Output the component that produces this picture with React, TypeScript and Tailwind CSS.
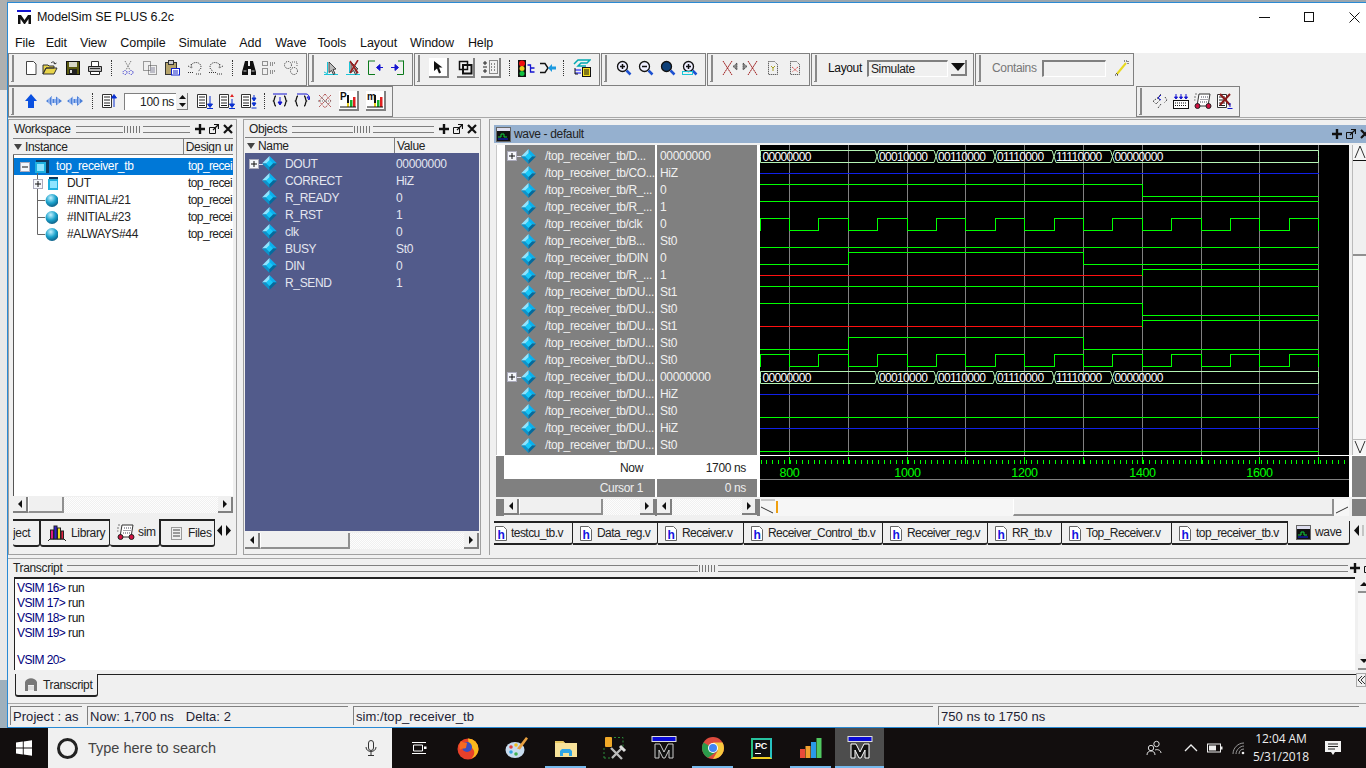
import React from "react";

type SP = { w?: number; h?: number; className?: string; children?: React.ReactNode };
const S = ({ w = 16, h = 16, className = "", children }: SP) => (
  <svg width={w} height={h} viewBox={`0 0 ${w} ${h}`} className={"block shrink-0 " + className}>{children}</svg>
);

const Grip = () => <div className="ml-[2px] w-[3px] h-[27px] shrink-0 border-r-2 border-b border-[#8a8a8a]" />;
const Sep = ({ className = "" }: { className?: string }) => (
  <div className={"w-px h-[16px] shrink-0 border-l border-dotted border-[#333] " + className} />
);
const Group = ({ className = "", children }: { className?: string; children: React.ReactNode }) => (
  <div className={"flex items-center shrink-0 h-full border border-[#808080] " + className}>{children}</div>
);

/* ---- toolbar icons ---- */
const INew = ({ className }: SP) => <S className={className}><path d="M3.500 1.500h7l2.500 2.500v10.500h-9.500z" fill="#fff" stroke="#444" /></S>;
const IOpen = ({ className }: SP) => <S className={className}><path d="M1 14V5h5l1 1h5v2H4L1 14zM1 14l3-6h11l-3 6z" fill="#e8d44a" stroke="#333" /><path d="M9 3c2-2 4-1 4 1M13 4l1.500-1M13 4l-1.500-1" stroke="#333" fill="none" /></S>;
const ISave = ({ className }: SP) => <S className={className}><rect x="1.500" y="1.500" width="13" height="13" fill="#5a5a10" stroke="#111" /><rect x="4" y="2" width="8" height="5" fill="#d8d8c8" /><rect x="4" y="9" width="8" height="5" fill="#222" /><rect x="5" y="10" width="2" height="3" fill="#ddd" /></S>;
const IPrint = ({ className }: SP) => <S className={className}><path d="M4.500 6V1.500h7V6" fill="#fff" stroke="#333" /><path d="M1.500 6.500h13v5h-13z" fill="#bbb" stroke="#222" /><path d="M3.500 11.500h9v3h-9z" fill="#fff" stroke="#222" /><path d="M3 8.500h10" stroke="#333" /></S>;
const ICut = ({ className }: SP) => <S className={className}><path d="M5 1l5 9M11 1l-5 9" stroke="#666" strokeDasharray="1 1" /><circle cx="5" cy="12.500" r="2" fill="none" stroke="#22c" strokeDasharray="1 1" /><circle cx="11" cy="12.500" r="2" fill="none" stroke="#22c" strokeDasharray="1 1" /></S>;
const ICopy = ({ className }: SP) => <S className={className}><path d="M1.500 1.500h7v9h-7zM6.500 5.500h8v9h-8z" fill="none" stroke="#444" strokeDasharray="1 1" /><path d="M8 7h5v6H8z" fill="#99a" opacity=".6" /></S>;
const IPaste = ({ className }: SP) => <S className={className}><rect x="1.500" y="2.500" width="11" height="12" fill="#b5a36a" stroke="#333" /><rect x="4.500" y="0.500" width="5" height="4" fill="#ccc" stroke="#333" /><rect x="7.500" y="8.500" width="8" height="6.500" fill="#fff" stroke="#12c" /><path d="M9 11h5M9 13h5" stroke="#12c" /></S>;
const IUndo = ({ className }: SP) => <S className={className}><path d="M1 12.500h6M9 14h6M4 5c3-4 10-3 10 2 0 2-1 3-3 4" fill="none" stroke="#333" strokeDasharray="1 1" /><path d="M1 6l4 2-1-4" fill="none" stroke="#333" strokeDasharray="1 1" /></S>;
const IRedo = ({ className }: SP) => <S className={className}><path d="M1 12.500h7M9 14h6M12 5C9 1 2 2 2 7c0 2 1 3 3 4" fill="none" stroke="#333" strokeDasharray="1 1" /><path d="M15 6l-4 2 1-4" fill="none" stroke="#333" strokeDasharray="1 1" /></S>;
const IBinoc = ({ className }: SP) => <S className={className}><path d="M4 1h3v5h2V1h3l3 11v3h-5V9H7v6H1v-3z" fill="#111" /><path d="M2.500 11h3M10.500 11h3" stroke="#ccc" /></S>;
const IFind = ({ className }: SP) => <S className={className}><path d="M1.500 1.500h5v4h-5zM1.500 8.500h5v6h-5zM9 3h6M9 5h4M9 11h6M9 13h4" fill="none" stroke="#333" strokeDasharray="1 1" /></S>;
const IReplace = ({ className }: SP) => <S className={className}><circle cx="5" cy="5" r="3.500" fill="none" stroke="#333" strokeDasharray="1 1" /><circle cx="11" cy="11" r="3.500" fill="none" stroke="#333" strokeDasharray="1 1" /><path d="M9 2h5v5" fill="none" stroke="#666" strokeDasharray="1 1" /></S>;
const ICursorA = ({ className }: SP) => <S className={className}><path d="M4.500 2v11M1 14.500h14" stroke="#19c5d8" fill="none" /><path d="M1 12l4 2M3 14.500h8" stroke="#19c5d8" /><path d="M6 2l7 7-3 .5 2 4-1.500 1-2-4-2.500 2z" fill="#bbb" stroke="#222" strokeWidth=".8" /></S>;
const ICursorX = ({ className }: SP) => <S className={className}><path d="M4.500 2v11M1 14.500h14" stroke="#19c5d8" fill="none" /><path d="M6 2l7 7-3 .5 2 4-1.500 1-2-4-2.500 2z" fill="#bbb" stroke="#222" strokeWidth=".8" /><path d="M13 0L5 13M5 1l8 12" stroke="#9b1c1c" strokeWidth="1.500" /></S>;
const ICurLeft = ({ className }: SP) => <S w={18} className={className}><path d="M1.500 0.500V14.500H8M2 1h6" stroke="#0a7a1a" fill="none" /><path d="M16 7.500H10M13 4.500L9.500 7.500 13 10.500z" stroke="#1414d0" fill="#1414d0" /></S>;
const ICurRight = ({ className }: SP) => <S className={className}><path d="M14.500 0.500V14.500H8M14.500 1H9" stroke="#0a7a1a" fill="none" /><path d="M2 7.500h6M6 4.500l3.500 3L6 10.500z" stroke="#1414d0" fill="#1414d0" /></S>;
const Btn = ({ w, className = "", children }: { w: string; className?: string; children: React.ReactNode }) => (
  <div className={`${w} h-[20px] shrink-0 flex items-center justify-center border-r-2 border-b-2 border-[#808080] ` + className}>{children}</div>
);
const IArrowBtn = ({ className }: SP) => <Btn w="w-[20px]" className={"bg-white " + (className || "")}><svg width="12" height="15" viewBox="0 0 12 15"><path d="M2 1v10l3-2.500 2 5 2-1-2-5h3.500z" fill="#111" /></svg></Btn>;
const IZoomBtn = ({ className }: SP) => <Btn w="w-[18px]" className={className}><svg width="15" height="15" viewBox="0 0 15 15"><path d="M1.500 1.500h8v8h-8z" fill="none" stroke="#111" strokeWidth="1.500" /><path d="M5 5h8.500v8.500H5z" fill="none" stroke="#111" strokeWidth="2" /></svg></Btn>;
const ISplitBtn = ({ className }: SP) => <Btn w="w-[20px]" className={className}><svg width="17" height="16" viewBox="0 0 17 16"><path d="M1 4h4M1 8h4M1 12h4M3 2v4M3 10v4" stroke="#222" /><path d="M7.500 1.500h8v13h-8z" fill="none" stroke="#222" strokeDasharray="1 1" /><path d="M9 5h1M12 5h1M9 8h1M12 8h1M9 11h1M12 11h1" stroke="#222" /></svg></Btn>;
const ITraffic = ({ className }: SP) => <S w={17} h={17} className={className}><rect x="0" y="0" width="8" height="17" fill="#111" /><circle cx="4" cy="3.500" r="3" fill="#f01010" /><circle cx="4" cy="8.500" r="2.500" fill="#e8d020" /><circle cx="4" cy="13.500" r="2.500" fill="#10c040" /><path d="M9.500 5h3v7h4M12.500 8h4" fill="none" stroke="#1414d0" strokeWidth="1.300" /></S>;
const IMerge = ({ className }: SP) => <S className={className}><path d="M0 3.500h5l3 4.500-3 4.500H0" fill="none" stroke="#111" strokeWidth="1.400" /><path d="M16 6.500h-4V4L8 8l4 4V9.500h4z" fill="#1c9ae0" /></S>;
const IWaveYellow = ({ className }: SP) => <S w={18} h={18} className={className}><path d="M1 5l4-4h12l-3 3H8L5 7h8" fill="none" stroke="#00a8b0" strokeWidth="1.500" /><path d="M2 11h6M2 14h6" stroke="#00f" /><path d="M2 9v6h3" stroke="#111" fill="none" /><rect x="9.500" y="8.500" width="8" height="9" fill="#f4e020" stroke="#111" /><path d="M11 11h5M11 13h5M11 15h5" stroke="#111" /></S>;
const Lens = ({ fill = "none", children }: { fill?: string; children?: React.ReactNode }) => <><circle cx="6.500" cy="6.500" r="5" fill={fill} stroke="#111" strokeWidth="1.300" /><path d="M10.500 10.500l4 4" stroke="#1c50d0" strokeWidth="2.500" />{children}</>;
const IZoomIn = ({ className }: SP) => <S className={className}><Lens fill="#eef"><path d="M4 6.500h5M6.500 4v5" stroke="#111" strokeWidth="1.500" /></Lens></S>;
const IZoomOut = ({ className }: SP) => <S className={className}><Lens fill="#eef"><path d="M4 6.500h5" stroke="#111" strokeWidth="1.500" /></Lens></S>;
const IZoomFull = ({ className }: SP) => <S className={className}><Lens fill="#0d3f78" /></S>;
const IZoomCur = ({ className }: SP) => <S className={className}><Lens fill="#eef"><path d="M4 6.500h5M6.500 4v5" stroke="#111" strokeWidth="1.500" /><rect x="0.500" y="11.500" width="10" height="3" fill="none" stroke="#19c5d8" /></Lens></S>;
const IXL = ({ className }: SP) => <S className={className}><path d="M1 1l9 14M10 1L1 15" stroke="#a02020" strokeDasharray="2 .5" /><path d="M15 3L11 6.500l4 3.500z" fill="#888" stroke="#333" strokeDasharray="1 1" /></S>;
const IXR = ({ className }: SP) => <S className={className}><path d="M6 1l9 14M15 1L6 15" stroke="#a02020" strokeDasharray="2 .5" /><path d="M1 3L5 6.500 1 10z" fill="#888" stroke="#333" strokeDasharray="1 1" /></S>;
const IDocA = ({ className }: SP) => <S className={className}><path d="M3.500 1.500h6l3 3v10h-9z" fill="none" stroke="#333" strokeDasharray="1 1" /><path d="M6 6l2 2 2-2M8 8v3" stroke="#a8a020" fill="none" /></S>;
const IDocB = ({ className }: SP) => <S className={className}><path d="M3.500 1.500h6l3 3v10h-9z" fill="none" stroke="#333" strokeDasharray="1 1" /><path d="M5 7l6 5M11 7l-6 5" stroke="#d02020" strokeDasharray="1 1" /></S>;
const IPencil = ({ className }: SP) => <S className={className}><path d="M3 14l9-11" stroke="#e8d820" strokeWidth="2" /><path d="M10 1h4v4M2 13l2 2" fill="none" stroke="#222" strokeDasharray="1 1" /><path d="M1 15h4" stroke="#222" strokeDasharray="1 1" /></S>;
const IUp = ({ className }: SP) => <S className={className}><path d="M8 1l6 7h-3v7H5V8H2z" fill="#0a50e0" /></S>;
const ILeftArr = ({ className }: SP) => <S className={className}><path d="M0 8l6-5v3h4V3.500L16 8l-6 4.500V10H6v3z" fill="#4a7fd8" /><path d="M3 5v6M6 4v8M9 4v8M12 5v6" stroke="#d8e4ff" /></S>;
const IRightArr = ({ className }: SP) => <S className={className}><path d="M16 8l-6-5v3H6V3.500L0 8l6 4.500V10h4v3z" fill="#4a7fd8" /><path d="M3 5v6M6 4v8M9 4v8M12 5v6" stroke="#d8e4ff" /></S>;
const Lines = () => <><path d="M1.500 1.500h9v13h-9z" fill="#fff" stroke="#333" /><path d="M3 4h6M3 7h6M3 10h6M3 12.500h6" stroke="#222" /></>;
const ITextUp = ({ className }: SP) => <S className={className}><Lines /><path d="M13 14V3M10.500 5L13 1.500 15.500 5z" stroke="#0a30d0" fill="#0a30d0" /></S>;
const ITextD1 = ({ className }: SP) => <S w={18} className={className}><Lines /><path d="M14 3v10M11.500 11l2.500 3.500 2.500-3.500zM11 15.500h6" stroke="#0a30d0" fill="#0a30d0" /></S>;
const ITextD2 = ({ className }: SP) => <S w={18} className={className}><Lines /><path d="M14 6v7M11.500 11l2.500 3.500 2.500-3.500z" stroke="#0a30d0" fill="#0a30d0" /><path d="M14 1l2 3h-4z" fill="#e02020" /><path d="M11 15.500h6" stroke="#0a30d0" /></S>;
const ITextD3 = ({ className }: SP) => <S w={17} className={className}><Lines /><path d="M14 2v5M12 5l2 3 2-3zM14 9v2M12 10l2 3 2-3z" stroke="#0a30d0" fill="#0a30d0" /><path d="M11.500 15h5" stroke="#0a30d0" /></S>;
const IBraceA = ({ className }: SP) => <S className={className}><path d="M4 3C2 3 3 7 1.500 8 3 9 2 13 4 13M12 3c2 0 1 4 2.500 5-1.500 1-.5 5-2.500 5" fill="none" stroke="#111" strokeWidth="1.300" /><path d="M8 4v7M6 9l2 3 2-3z" stroke="#1414d0" fill="#1414d0" /><path d="M1 1h14" stroke="#1414d0" /></S>;
const IBraceB = ({ className }: SP) => <S className={className}><path d="M4 3C2 3 3 7 1.500 8 3 9 2 13 4 13M10 3c2 0 1 4 2.500 5-1.500 1-.5 5-2.500 5" fill="none" stroke="#111" strokeWidth="1.300" /><path d="M3 1h9c3 0 3 3 3 5M13 4l2 3 1-3z" stroke="#1414d0" fill="none" /></S>;
const IXMesh = ({ className }: SP) => <S className={className}><path d="M2 2l12 12M14 2L2 14M8 1l6 7-6 7-6-7z" fill="none" stroke="#a02020" strokeDasharray="1 1" /><path d="M1 8h14M4 4l8 8" stroke="#777" strokeDasharray="1 1" /></S>;
const IPerf = ({ className, l = "P" }: SP & { l?: string }) => (
  <div className={"w-[20px] h-[20px] shrink-0 border-r-2 border-b-2 border-[#808080] bg-white " + (className || "")}>
    <svg width="18" height="18" viewBox="0 0 18 18" className="block">
      <rect x="8" y="4" width="2" height="12" fill="#111" /><rect x="11" y="9" width="2.500" height="7" fill="#18b030" /><rect x="14" y="6" width="2.500" height="10" fill="#e02020" /><rect x="8" y="12" width="2" height="4" fill="#e8d020" /><path d="M1 16h16" stroke="#111" />
      <text x="1" y="9" fontSize="10" fontWeight="700" fontFamily="Liberation Sans" fill="#111">{l}</text>
    </svg>
  </div>
);
const IWaves = ({ className }: SP) => <S className={className}><path d="M9 1L5 5l3 2-4 4M13 4l2 3-3 3M4 6L1 8l3 3M9 11l-3 4" fill="none" stroke="#222" strokeDasharray="1 1" /><path d="M9 2L6 5l3 2" fill="none" stroke="#1414d0" /></S>;
const IKeys = ({ className }: SP) => <S className={className}><rect x="0.500" y="7.500" width="15" height="8" fill="#fff" stroke="#111" /><path d="M2 10h12M2 12.500h12" stroke="#111" strokeDasharray="1 1" /><path d="M3 1v4M1.500 4L3 6l1.500-2zM8 1v4M6.500 4L8 6l1.500-2zM13 1v4M11.500 4L13 6l1.500-2z" stroke="#1414d0" fill="#1414d0" /></S>;
const ISim = ({ className }: SP) => <S w={18} className={className}><path d="M5 1h11l-2 12H3z" fill="#fff" stroke="#333" /><path d="M7 4h7M6.500 6.500h7M6 9h7" stroke="#445" strokeDasharray="1 1" /><circle cx="3.500" cy="13" r="2.500" fill="#d01040" stroke="#222" /><circle cx="14.500" cy="13" r="2.500" fill="#d01040" stroke="#222" /><path d="M3 1H1M2 4H0M1.500 7H0" stroke="#777" /></S>;
const IClrX = ({ className }: SP) => <S w={17} className={className}><Lines /><path d="M4 1l10 11M14 1L4 12" stroke="#8b1a1a" strokeWidth="2" /><path d="M14 10v4M11.500 15.500h5" stroke="#1414d0" /></S>;
const ILibrary = ({ className }: SP) => <S w={20} h={18} className={className}><path d="M1 17l2-2h14l2 2" fill="none" stroke="#222" /><rect x="3.500" y="6" width="3" height="9" fill="#e01a80" stroke="#222" /><rect x="7" y="2" width="3" height="13" fill="#3020d0" stroke="#222" /><rect x="10.500" y="4" width="3" height="11" fill="#f0e020" stroke="#222" /><rect x="14" y="7" width="2.500" height="8" fill="#e02040" stroke="#222" /></S>;

/* ---- tree / list icons ---- */
const Diamond = ({ className }: SP) => (
  <S w={15} h={15} className={className}>
    <path d="M7.500 0L15 7.500H7.500z" fill="#0ab0ee" /><path d="M7.500 0L0 7.500h7.500z" fill="#8fe4ff" />
    <path d="M0 7.500L7.500 15V7.500z" fill="#0c94cc" /><path d="M15 7.500L7.500 15V7.500z" fill="#056a9c" />
    <path d="M7.500 4l3.500 3.500-3.500 3.500L4 7.500z" fill="#18c8f8" />
  </S>
);
const Cube = () => <><rect x="1" y="0" width="13" height="13" fill="#0c3a62" /><rect x="0" y="2" width="11" height="11" fill="#1eb0e0" /><rect x="2" y="4" width="7" height="7" fill="#8fe4ff" /></>;
const Sphere = ({ id }: { id: string }) => <>
  <defs><radialGradient id={id} cx=".4" cy=".3" r=".8"><stop offset="0" stopColor="#c4f1ff" /><stop offset=".5" stopColor="#1aa2cc" /><stop offset="1" stopColor="#0a4d74" /></radialGradient></defs>
  <circle cx="7" cy="7" r="6.500" fill={`url(#${id})`} />
</>;
const ExpBox = ({ minus }: { minus?: boolean }) => <>
  <rect x="0.500" y="0.500" width="9" height="9" fill="#f4f6fb" stroke="#aab" />
  <path d={minus ? "M2 5h6" : "M2 5h6M5 2v6"} stroke="#111" />
</>;
const Expander = ({ className }: SP) => (
  <S w={14} h={10} className={className}><path d="M9 5.500h5" stroke="#dde" /><ExpBox /></S>
);

/* ---- header bits ---- */
const Dock = () => (
  <div className="flex items-center gap-[4px] shrink-0">
    <S w={10} h={10}><path d="M5 0v10M0 5h10" stroke="#111" strokeWidth="2.400" /></S>
    <S w={10} h={10}><path d="M.5 3.500h6v6h-6z" fill="none" stroke="#111" /><path d="M4 6l5-5M5 .5h4.500V5" fill="none" stroke="#111" strokeWidth="1.200" /></S>
    <S w={10} h={10}><path d="M1 1l8 8M9 1L1 9" stroke="#111" strokeWidth="2.200" /></S>
  </div>
);
const Rule = ({ className = "" }: { className?: string }) => <div className={"h-[7px] border-y border-[#808080] " + className} />;
const Dots = () => (
  <div className="w-[18px] h-[7px] shrink-0 mx-[1px] bg-[repeating-linear-gradient(90deg,#777_0_1px,transparent_1px_3px)]" />
);
const PanelHead = ({ title, className = "" }: { title: string; className?: string }) => (
  <div className={"h-[18px] flex items-center shrink-0 pl-[5px] pr-[3px] " + className}>
    <span className="text-[#222] mr-[5px]">{title}</span>
    <Rule className="flex-1" /><Dots /><Rule className="flex-1" />
    <div className="ml-[5px]"><Dock /></div>
  </div>
);

/* ---- scrollbars ---- */
const ScrollBtn = ({ dir }: { dir: "l" | "r" }) => (
  <div className="w-[15px] h-[16px] shrink-0 flex items-center justify-center bg-[#f0f0f0] border-r-2 border-b-2 border-[#808080]">
    <S w={6} h={8}>{dir === "l" ? <path d="M5 0v8L1 4z" fill="#111" /> : <path d="M1 0v8l4-4z" fill="#111" />}</S>
  </div>
);
const HScroll = ({ thumb, className = "" }: { thumb: string; className?: string }) => (
  <div className={"flex h-[16px] items-stretch bg-[repeating-conic-gradient(#f0f0f0_0_25%,#fdfdfd_0_50%)] bg-[length:2px_2px] " + className}>
    <ScrollBtn dir="l" />
    <div className={"h-full bg-[#f0f0f0] border-l border-[#fff] border-r-2 border-b-2 border-r-[#909090] border-b-[#909090] shrink-0 " + thumb} />
    <div className="flex-1" />
    <ScrollBtn dir="r" />
  </div>
);

/* ---- tabs ---- */
const HFile = () => (
  <S w={12} h={15} className="shrink-0">
    <path d="M.5.5h8l3 3v11H.5z" fill="#fff" stroke="#666" />
    <text x="2.500" y="12.500" fontFamily="Liberation Sans" fontWeight="700" fontSize="12" fill="#1414e0">h</text>
  </S>
);
const SrcTab = ({ name, w, first }: { name: string; w: string; first?: boolean }) => (
  <div className={`${w} h-[24px] shrink-0 flex items-center border-t-2 border-b-2 border-r border-[#222] rounded-br-[3px] text-[#222] whitespace-nowrap tracking-[-0.55px] ` + (first ? "pl-[1px] gap-[4px]" : "pl-[7px] gap-[5px]")}>
    <HFile /><span>{name}</span>
  </div>
);
const BTab = ({ w, className = "", children }: { w: string; className?: string; children: React.ReactNode }) => (
  <div className={`${w} h-[28px] shrink-0 flex items-center border-b-2 border-r border-[#222] rounded-b-[3px] text-[#222] whitespace-nowrap overflow-hidden ` + className}>{children}</div>
);

/* ---- wave chart ---- */
const GRID = [789.5, 848.5, 907.5, 965.5, 1024.5, 1083.5, 1142.5, 1201.5, 1259.5, 1318.5];
const CLK = [789.5, 818.5, 848.5, 877.5, 907.5, 936.5, 965.5, 995.5, 1024.5, 1054.5, 1083.5, 1112.5, 1142.5, 1171.5, 1201.5, 1230.5, 1259.5, 1289.5];
const hi = (i: number) => 150.5 + 17 * i;
const lo = (i: number) => 162.5 + 17 * i;
const md = (i: number) => 156.5 + 17 * i;
const END = 1318.5;
const clock = (i: number) => {
  let d = `M760.5 ${lo(i)}V${hi(i)}`;
  let up = true;
  for (const x of CLK) { d += `H${x}V${up ? lo(i) : hi(i)}`; up = !up; }
  return d + `H${END}V${lo(i)}`;
};
const BUS = [[760.5, 877], [877, 936], [936, 995], [995, 1054], [1054, 1112.5], [1112.5, END]];
const BUSV = ["00000000", "00010000", "00110000", "01110000", "11110000", "00000000"];
const Bus = ({ i }: { i: number }) => (
  <g>
    {BUS.map(([a, b], k) => (
      <g key={k}>
        <path fill="none" stroke="#b4f4b4" d={`M${a} ${md(i)}L${k ? a + 2 : a} ${hi(i)}H${k === 5 ? b : b - 2}L${b} ${md(i)}L${k === 5 ? b : b - 2} ${lo(i)}H${k ? a + 2 : a}z`} />
        <text x={a + 2} y={md(i) + 4} fontSize="12" letterSpacing="-.65" fill="#fff" fontFamily="Liberation Sans">{BUSV[k]}</text>
      </g>
    ))}
  </g>
);
const G = "#00ff00";
const WaveChart = () => (
  <svg width="589" height="310" viewBox="760 145 589 310" className="block shrink-0">
    <rect x="760" y="145" width="589" height="310" fill="#000" />
    {GRID.map((x) => <path key={x} d={`M${x} 145V455`} stroke="#808080" />)}
    <g fill="none" shapeRendering="crispEdges">
      <path d={`M760 ${md(1)}H${END}`} stroke="#1020e8" />
      <path d={`M760 ${hi(2)}H1142.5V${lo(2)}H${END}`} stroke={G} />
      <path d={`M760 ${hi(3)}H${END}`} stroke={G} />
      <path d={clock(4)} stroke={G} />
      <path d={`M760 ${lo(5)}H${END}`} stroke={G} />
      <path d={`M760 ${lo(6)}H848.5V${hi(6)}H1083.5V${lo(6)}H${END}`} stroke={G} />
      <path d={`M760 ${md(7)}H1142.5`} stroke="#ff1010" />
      <path d={`M1142.5 ${md(7)}V${hi(7)}H${END}`} stroke={G} />
      <path d={`M760 ${hi(8)}H${END}`} stroke={G} />
      <path d={`M760 ${hi(9)}H1142.5V${lo(9)}H${END}`} stroke={G} />
      <path d={`M760 ${md(10)}H1142.5`} stroke="#ff1010" />
      <path d={`M1142.5 ${md(10)}V${hi(10)}H${END}`} stroke={G} />
      <path d={`M760 ${lo(11)}H848.5V${hi(11)}H1083.5V${lo(11)}H${END}`} stroke={G} />
      <path d={clock(12)} stroke={G} />
      <path d={`M760 ${md(14)}H${END}`} stroke="#1020e8" />
      <path d={`M760 ${lo(15)}H${END}`} stroke={G} />
      <path d={`M760 ${md(16)}H${END}`} stroke="#1020e8" />
      <path d={`M760 ${lo(17)}H${END}`} stroke={G} />
    </g>
    <Bus i={0} />
    <Bus i={13} />
  </svg>
);
const TICKS = Array.from({ length: 100 }, (_, k) => 760.5 + k * 5.89);
const TimeScale = () => (
  <svg width="589" height="41" viewBox="760 456 589 41" className="block shrink-0">
    <rect x="760" y="456" width="589" height="41" fill="#000" />
    <g shapeRendering="crispEdges">
      {TICKS.map((x, k) => <path key={k} d={`M${Math.round(x) + 0.5} 460V464`} stroke={G} />)}
      {GRID.map((x) => <path key={x} d={`M${x} 457V464`} stroke={G} />)}
      <path d="M760 479.500H1349" stroke="#808080" />
    </g>
    {([["800", 789.5], ["1000", 907.5], ["1200", 1024.5], ["1400", 1142.5], ["1600", 1259.5]] as [string, number][]).map(([t, x]) => (
      <text key={t} x={x} y="476.500" textAnchor="middle" fontSize="12.500" fill={G} fontFamily="Liberation Sans">{t}</text>
    ))}
  </svg>
);

const M = ({ sel }: { sel?: boolean }) => (
  <svg width="26" height="24" viewBox="0 0 26 24" className="block">
    <rect x="1" y="0.500" width="24" height="5" fill="#0a0ad8" stroke="#ddd" />
    <path d="M4 22V8h5l4 8 4-8h5v14h-4v-8l-4 8h-2l-4-8v8z" fill="#111" stroke={sel ? "#fff" : "#ccc"} />
  </svg>
);

const NAMES = ["/top_receiver_tb/D...", "/top_receiver_tb/CO...", "/top_receiver_tb/R_...", "/top_receiver_tb/R_...", "/top_receiver_tb/clk", "/top_receiver_tb/B...", "/top_receiver_tb/DIN", "/top_receiver_tb/R_...", ...Array(10).fill("/top_receiver_tb/DU...")];
const VALS = ["00000000", "HiZ", "0", "1", "0", "St0", "0", "1", "St1", "St0", "St1", "St0", "St0", "00000000", "HiZ", "St0", "HiZ", "St0"];
const OBJ = [["DOUT", "00000000"], ["CORRECT", "HiZ"], ["R_READY", "0"], ["R_RST", "1"], ["clk", "0"], ["BUSY", "St0"], ["DIN", "0"], ["R_SEND", "1"]];

const TREE: { name: string; kind: "root" | "dut" | "sph"; last?: boolean }[] = [
  { name: "top_receiver_tb", kind: "root" },
  { name: "DUT", kind: "dut" },
  { name: "#INITIAL#21", kind: "sph" },
  { name: "#INITIAL#23", kind: "sph" },
  { name: "#ALWAYS#44", kind: "sph", last: true },
];

const TreeRow = ({ r, i }: { r: (typeof TREE)[number]; i: number }) => (
  <div className={"h-[17px] flex items-center whitespace-nowrap overflow-hidden " + (i === 0 ? "bg-[#0078d7] text-white" : "text-[#222]")}>
    <svg width="43" height="17" viewBox="0 0 43 17" className="block shrink-0 ml-px">
      {r.kind === "root" && <>
        <path d="M22.500 9V17" stroke="#666" fill="none" />
        <g transform="translate(5 4)"><ExpBox minus /></g>
        <g transform="translate(20 2)"><Cube /></g>
      </>}
      {r.kind === "dut" && <>
        <path d="M22.500 0v17" stroke="#666" fill="none" />
        <g transform="translate(18 4)"><ExpBox /></g>
        <g transform="translate(33 2)"><Cube /></g>
      </>}
      {r.kind === "sph" && <>
        <path d={r.last ? "M22.500 0V8.500H30" : "M22.500 0V17M22.500 8.500H30"} stroke="#666" fill="none" />
        <g transform="translate(30 1.500)"><Sphere id={"s" + i} /></g>
      </>}
    </svg>
    <span className={"shrink-0 " + (r.kind === "root" ? "-ml-[2px] w-[132px]" : "ml-[9px] w-[121px]")}>{r.name}</span>
    <span className="shrink-0 tracking-[-0.6px]">top_recei</span>
  </div>
);

const Tray = () => (
  <div className="ml-auto flex items-center h-full text-white shrink-0">
    <S w={16} h={16} className="mr-[22px]"><circle cx="10.500" cy="4" r="2.700" fill="none" stroke="#ddd" /><circle cx="5" cy="8" r="2.700" fill="none" stroke="#ddd" /><path d="M1 15c0-3 2-4 4-4s4 1 4 4M9 10c2-1 6 0 6 3" fill="none" stroke="#ddd" /></S>
    <S w={14} h={8} className="mr-[9px]"><path d="M1 7l6-6 6 6" fill="none" stroke="#eee" strokeWidth="1.300" /></S>
    <S w={16} h={10} className="mr-[9px]"><rect x="0.500" y="1" width="13" height="8" fill="none" stroke="#eee" /><rect x="2" y="2.500" width="7" height="5" fill="#eee" /><rect x="14" y="3.500" width="1.500" height="3" fill="#eee" /></S>
    <S w={14} h={14} className="mr-[5px]"><path d="M1 13c0-6 5-11 11-11M4 13c0-4 4-8 8-8M7 13c0-3 2-5 5-5" fill="none" stroke="#999" /><circle cx="11" cy="12" r="1.300" fill="#eee" /></S>
    <div className="w-[60px] flex flex-col items-center text-[12px] leading-[18px] text-[#eee] font-['Open_Sans',sans-serif] tracking-[-0.1px]">
      <span>12:04 AM</span><span>5/31/2018</span>
    </div>
    <S w={16} h={16} className="ml-[14px] mr-[25px]"><path d="M0 1h16v11h-6l-2 3-2-3H0z" fill="#f2f2f2" /><path d="M3 4h10M3 6.500h10M3 9h7" stroke="#222" /></S>
  </div>
);

const TaskCell = ({ on, active, children }: { on?: boolean; active?: boolean; children: React.ReactNode }) => (
  <div className={"w-[49px] h-full shrink-0 flex flex-col " + (active ? "bg-[#4d4d4d]" : "")}>
    <div className="flex-1 flex items-center justify-center pt-[2px]">{children}</div>
    <div className={"h-[2px] " + (active ? "bg-[#76b9ed]" : on ? "mx-[4px] bg-[#76b9ed]" : "")} />
  </div>
);

export default function App() {
  return (
    <div className="w-[1366px] h-[768px] overflow-hidden flex flex-col bg-[#f0f0f0] text-[12px] tracking-[-0.35px] leading-none font-['Liberation_Sans',sans-serif]">
      <div className="h-[728px] flex shrink-0">
        <div className="w-[7px] shrink-0 flex flex-col">
          <div className="h-[90px] bg-[#aeb0b0]" />
          <div className="flex-1 bg-[#e9e9e9]" />
          <div className="h-[48px] bg-[#9fb0bc]" />
        </div>
        <div className="flex-1 min-w-0 flex flex-col">
          <div className="h-[2px] shrink-0 bg-[#9aa6ae]" />
          <div className="flex-1 min-h-0 flex flex-col border-t border-b border-l border-[#2a8ad4] bg-[#f0f0f0]">
            {/* title */}
            <div className="h-[30px] shrink-0 bg-white flex items-center pb-[2px]">
              <svg width="15" height="15" viewBox="0 0 15 15" className="ml-[9px] block shrink-0">
                <rect x="0" y="0" width="14" height="2" fill="#1414d0" />
                <path d="M1 14V5h3l3.500 5L11 5h3v9h-2.500V9L8 14H7L3.500 9v5z" fill="#111" />
              </svg>
              <span className="ml-[5px] text-[12.5px] text-[#111] tracking-[-0.1px]">ModelSim SE PLUS 6.2c</span>
              <div className="ml-auto flex items-center">
                <div className="w-[11px] h-px bg-[#111]" />
                <div className="ml-[34px] w-[10px] h-[10px] border border-[#111]" />
                <S w={11} h={11} className="ml-[35px] mr-[6px]"><path d="M.5.5l10 10M10.500.5l-10 10" stroke="#111" /></S>
              </div>
            </div>
            {/* menu */}
            <div className="h-[20px] shrink-0 bg-white flex items-center text-[12.5px] text-[#111] tracking-[-0.1px]">
              <span className="ml-[7px]">File</span>
              <span className="ml-[11px]">Edit</span>
              <span className="ml-[13px]">View</span>
              <span className="ml-[14px]">Compile</span>
              <span className="ml-[13px]">Simulate</span>
              <span className="ml-[13px]">Add</span>
              <span className="ml-[14px]">Wave</span>
              <span className="ml-[11px]">Tools</span>
              <span className="ml-[14px]">Layout</span>
              <span className="ml-[13px]">Window</span>
              <span className="ml-[14px]">Help</span>
            </div>
            {/* toolbar 1 */}
            <div className="h-[33px] shrink-0 flex gap-[1px]">
              <Group className="w-[299px] pb-[3px]"><Grip /><INew className="ml-[9px]" /><IOpen className="ml-[3px]" /><ISave className="ml-[7px]" /><IPrint className="ml-[6px]" /><Sep className="ml-[8px]" /><ICut className="ml-[8px]" /><ICopy className="ml-[6px]" /><IPaste className="ml-[6px]" /><IUndo className="ml-[7px]" /><IRedo className="ml-[5px]" /><Sep className="ml-[8px]" /><IBinoc className="ml-[8px]" /><IFind className="ml-[4px]" /><IReplace className="ml-[6px]" /></Group>
              <Group className="w-[105px] pb-[3px]"><Grip /><ICursorA className="ml-[9px]" /><ICursorX className="ml-[6px]" /><ICurLeft className="ml-[6px]" /><ICurRight className="ml-[4px]" /></Group>
              <Group className="w-[186px] pb-[3px]"><Grip /><IArrowBtn className="ml-[9px]" /><IZoomBtn className="ml-[8px]" /><ISplitBtn className="ml-[6px]" /><Sep className="ml-[8px]" /><ITraffic className="ml-[8px]" /><IMerge className="ml-[5px]" /><Sep className="ml-[7px]" /><IWaveYellow className="ml-[9px]" /></Group>
              <Group className="w-[105px] pb-[3px]"><Grip /><IZoomIn className="ml-[9px]" /><IZoomOut className="ml-[6px]" /><IZoomFull className="ml-[6px]" /><IZoomCur className="ml-[6px]" /></Group>
              <Group className="w-[103px] pb-[3px]"><Grip /><IXL className="ml-[9px]" /><IXR className="ml-[4px]" /><IDocA className="ml-[7px]" /><IDocB className="ml-[6px]" /></Group>
              <Group className="w-[163px] pb-[3px]"><Grip />
                <span className="ml-[11px] text-[#111]">Layout</span>
                <div className="ml-[5px] w-[81px] h-[17px] shrink-0 flex items-center pl-[2px] border-l-2 border-t-2 border-[#808080] border-r border-b border-r-[#fff] border-b-[#fff] text-[#222]">Simulate</div>
                <div className="ml-[3px] w-[16px] h-[16px] shrink-0 flex items-center justify-center border-r-2 border-b-2 border-[#808080]"><S w={14} h={8}><path d="M0 0h14L7 8z" fill="#111" /></S></div>
              </Group>
              <Group className="w-[159px] pb-[3px]"><Grip />
                <span className="ml-[11px] text-[#777]">Contains</span>
                <div className="ml-[5px] w-[64px] h-[17px] shrink-0 border-l-2 border-t-2 border-[#808080] border-r border-b border-r-white border-b-white" />
                <IPencil className="ml-[8px]" />
              </Group>
            </div>
            {/* toolbar 2 */}
            <div className="h-[31px] shrink-0 flex">
              <Group className="w-[385px] pb-[1px]"><Grip /><IUp className="ml-[9px]" /><ILeftArr className="ml-[7px]" /><IRightArr className="ml-[5px]" /><Sep className="ml-[9px]" /><ITextUp className="ml-[8px]" />
                <div className="ml-[7px] w-[52px] h-[17px] shrink-0 flex items-center justify-end pr-[2px] bg-white border-l border-t border-[#808080] text-[#222] text-[12px]">100 ns</div>
                <div className="ml-px w-[11px] h-[17px] shrink-0 flex flex-col justify-around items-center border-r border-b border-[#808080]"><S w={7} h={4}><path d="M3.500 0L7 4H0z" fill="#111" /></S><S w={7} h={4}><path d="M0 0h7L3.500 4z" fill="#111" /></S></div>
                <ITextD1 className="ml-[8px]" /><ITextD2 className="ml-[4px]" /><ITextD3 className="ml-[4px]" /><Sep className="ml-[7px]" /><IBraceA className="ml-[7px]" /><IBraceB className="ml-[6px]" /><IXMesh className="ml-[7px]" /><IPerf className="ml-[6px]" /><IPerf l="m" className="ml-[7px]" />
              </Group>
              <Group className="w-[104px] ml-auto mr-[126px] pb-[1px]"><Grip /><IWaves className="ml-[10px]" /><IKeys className="ml-[5px]" /><ISim className="ml-[5px]" /><IClrX className="ml-[4px]" /></Group>
            </div>
            {/* main */}
            <div className="h-[438px] shrink-0 flex pt-[1px] border-t border-[#a8a8a8]">
              {/* workspace */}
              <div className="w-[229px] shrink-0 flex flex-col border border-[#a0a0a0]">
                <PanelHead title="Workspace" />
                <div className="h-[17px] shrink-0 ml-[4px] mr-[3px] flex items-center border-t border-b border-[#808080] text-[#222]">
                  <S w={9} h={8} className="ml-[1px]"><path d="M0 1h8L4 7z" fill="#444" /></S>
                  <span className="ml-[2px] w-[161px] whitespace-nowrap">Instance</span>
                  <div className="w-px h-full bg-[#808080]" />
                  <span className="ml-[2px] whitespace-nowrap overflow-hidden">Design ur</span>
                </div>
                <div className="h-[341px] shrink-0 ml-[4px] mr-[3px] pt-[2.5px] bg-white border-l border-[#555] overflow-hidden">
                  {TREE.map((r, i) => <TreeRow key={r.name} r={r} i={i} />)}
                </div>
                <HScroll thumb="w-[36px]" className="ml-[4px] mr-[3px] mt-[1px] shrink-0" />
                <div className="flex items-center ml-[4px] mt-[6px] text-[#222]">
                  <BTab w="w-[27px]" className="border-t-2"><span>ject</span></BTab>
                  <BTab w="w-[70px]" className="border-t-2 border-l pl-[6px] gap-[4px]"><ILibrary /><span>Library</span></BTab>
                  <BTab w="w-[50px]" className="pl-[7px] gap-[3px]"><ISim /><span>sim</span></BTab>
                  <BTab w="w-[55px]" className="border-t-2 border-l pl-[10px] gap-[5px]"><S w={12} h={13}><path d="M.5.5h10v12H.5z" fill="none" stroke="#444" strokeDasharray="1 1" /><path d="M2 3h7M2 6h7M2 9h7" stroke="#444" /></S><span>Files</span></BTab>
                  <S w={16} h={14} className="ml-[1px] mb-[5px]"><path d="M6 1v11L1 6.500zM10 1v11l5-5.500z" fill="#111" /></S>
                </div>
              </div>
              {/* objects */}
              <div className="ml-[6px] w-[238px] shrink-0 flex flex-col border border-[#a0a0a0]">
                <PanelHead title="Objects" />
                <div className="h-[16px] shrink-0 -mt-[1px] ml-[1px] mr-[1px] flex items-center border-t border-[#808080] text-[#222]">
                  <S w={9} h={8} className="ml-[2px]"><path d="M0 1h8L4 7z" fill="#444" /></S>
                  <span className="ml-[2px] w-[136px]">Name</span>
                  <div className="w-px h-full bg-[#808080]" />
                  <span className="ml-[2px]">Value</span>
                </div>
                <div className="h-[378px] shrink-0 mx-[1px] bg-[#525b8b] pt-[2px] text-[#e4e6f0]">
                  {OBJ.map(([n, v], i) => (
                    <div key={n} className="h-[17px] flex items-center whitespace-nowrap">
                      {i === 0 ? <Expander className="ml-[4px]" /> : <div className="w-[14px] ml-[4px] shrink-0" />}
                      <Diamond className="-ml-[1px]" />
                      <span className="ml-[8px] w-[111px]">{n}</span>
                      <span>{v}</span>
                    </div>
                  ))}
                </div>
                <HScroll thumb="w-[90px]" className="mx-[1px] mt-[2px] shrink-0" />
              </div>
              {/* wave */}
              <div className="ml-[8px] flex-1 min-w-0 flex flex-col border-l border-t border-[#a0a0a0] pt-[5px] overflow-hidden">
                <div className="h-[18px] shrink-0 ml-[4px] bg-[#95b0cf] flex items-center text-[#222]">
                  <S w={15} h={15} className="ml-[2px]"><rect x=".5" y=".5" width="14" height="14" fill="#111" stroke="#666" /><rect x="1" y="1" width="13" height="3" fill="#dde" /><path d="M2 10h3V7h3v3h3" fill="none" stroke="#10d040" /><path d="M2 12h10" stroke="#1020e8" /></S>
                  <span className="ml-[3px]">wave - default</span>
                  <div className="ml-auto -mr-[4px]"><Dock /></div>
                </div>
                <div className="flex-1 min-h-0 ml-[6px] flex flex-col">
                  <div className="h-[2px] shrink-0" />
                  {/* signals row */}
                  <div className="h-[310px] shrink-0 flex">
                    <div className="w-[159px] shrink-0 flex bg-[#808080] border-l border-[#c8c8c8]">
                      <div className="w-[8px] shrink-0 bg-white" />
                      <div className="flex-1 min-w-0 pt-[2.5px] text-[#f0f0f0]">
                        {NAMES.map((n, i) => (
                          <div key={i} className="h-[17px] flex items-center whitespace-nowrap">
                            {i === 0 || i === 13 ? <Expander className="ml-[2px]" /> : <div className="w-[14px] ml-[2px] shrink-0" />}
                            <Diamond />
                            <span className="ml-[9px]">{n}</span>
                          </div>
                        ))}
                      </div>
                    </div>
                    <div className="w-[2px] shrink-0 bg-white" />
                    <div className="w-[100px] shrink-0 bg-[#808080] pt-[2.5px] pl-[3px] text-[#f0f0f0]">
                      {VALS.map((v, i) => <div key={i} className="h-[17px] flex items-center">{v}</div>)}
                    </div>
                    <div className="w-[3px] shrink-0 bg-white" />
                    <WaveChart />
                    <div className="w-[3px] shrink-0 bg-[#f0f0f0]" />
                    <div className="w-[14px] shrink-0 flex flex-col border-l border-[#bbb] bg-[#f6f6f6]">
                      <div className="h-[16px] shrink-0 border-b border-[#111] flex justify-center"><S w={12} h={14}><path d="M1 13L6 1l5 12" fill="none" stroke="#333" /></S></div>
                      <div className="h-[95px] shrink-0 bg-[#f0f0f0] border-b-2 border-[#909090]" />
                      <div className="flex-1" />
                      <div className="h-[16px] shrink-0 border-t border-[#bbb] flex justify-center"><S w={12} h={14}><path d="M1 1l5 12 5-12" fill="none" stroke="#333" /></S></div>
                    </div>
                  </div>
                  {/* cursor rows */}
                  <div className="h-px shrink-0 bg-white" />
                  <div className="h-[41px] shrink-0 flex">
                    <div className="w-[159px] shrink-0 flex bg-[#808080]">
                      <div className="w-[8px] shrink-0" />
                      <div className="flex-1 flex flex-col">
                        <div className="h-[23px] bg-white flex items-center justify-end pr-[12px] text-[#222]">Now</div>
                        <div className="flex-1 flex items-center justify-end pr-[12px] text-[#eee]">Cursor 1</div>
                      </div>
                    </div>
                    <div className="w-[2px] shrink-0 bg-white" />
                    <div className="w-[100px] shrink-0 flex flex-col bg-[#808080]">
                      <div className="h-[23px] bg-white flex items-center justify-end pr-[11px] text-[#222]">1700 ns</div>
                      <div className="flex-1 flex items-center justify-end pr-[11px] text-[#eee]">0 ns</div>
                    </div>
                    <div className="w-[3px] shrink-0 bg-white" />
                    <TimeScale />
                    <div className="w-[3px] shrink-0 bg-white" />
                    <div className="w-[14px] shrink-0 bg-[#808080]" />
                  </div>
                  {/* scrollers */}
                  <div className="h-[17px] shrink-0 flex mt-[2px]">
                    <div className="w-[8px] shrink-0 bg-[#808080]" />
                    <HScroll thumb="w-[84px]" className="w-[151px] shrink-0" />
                    <div className="w-[2px] shrink-0 bg-[#808080]" />
                    <HScroll thumb="w-0 !border-0" className="w-[100px] shrink-0" />
                    <div className="w-[3px] shrink-0 bg-[#808080]" />
                    <div className="w-[589px] shrink-0 flex items-stretch bg-[#f6f6f6]">
                      <S w={15} h={16}><path d="M1 8l12 6" stroke="#333" /><path d="M1 1h14" stroke="#999" /></S>
                      <div className="w-[2px] h-[12px] ml-[1px] mt-[2px] bg-[#f0a010] shrink-0" />
                      <div className="flex-1 bg-[#f0f0f0] border-l border-white border-r-2 border-b-2 border-r-[#909090] border-b-[#909090] ml-[235px]" />
                      <S w={15} h={16}><path d="M14 8L2 14" stroke="#333" /></S>
                    </div>
                    <div className="w-[3px] shrink-0" />
                    <div className="w-[14px] shrink-0 bg-[#808080]" />
                  </div>
                  {/* tabs */}
                  <div className="mt-[5px] h-[24px] shrink-0 flex -ml-[2px] text-[#222]">
                    <SrcTab first w="w-[79px]" name="testcu_tb.v" />
                    <SrcTab w="w-[85px]" name="Data_reg.v" />
                    <SrcTab w="w-[86px]" name="Receiver.v" />
                    <SrcTab w="w-[139px]" name="Receiver_Control_tb.v" />
                    <SrcTab w="w-[105px]" name="Receiver_reg.v" />
                    <SrcTab w="w-[74px]" name="RR_tb.v" />
                    <SrcTab w="w-[110px]" name="Top_Receiver.v" />
                    <SrcTab w="w-[116px]" name="top_receiver_tb.v" />
                    <div className="w-[62px] h-[24px] shrink-0 flex items-center gap-[4px] pl-[8px] border-b-2 border-r border-[#222] rounded-br-[3px]">
                      <S w={15} h={15}><rect x=".5" y=".5" width="14" height="14" fill="#111" stroke="#666" /><rect x="1" y="1" width="13" height="3" fill="#dde" /><path d="M2 10h3V7h3v3h3" fill="none" stroke="#10d040" /><path d="M2 12h10" stroke="#1020e8" /></S>
                      <span>wave</span>
                    </div>
                    <S w={14} h={14} className="ml-[3px] mt-[3px]"><path d="M6 1v11L1 6.500z" fill="#111" /><path d="M10 1v11" stroke="#999" /></S>
                  </div>
                </div>
              </div>
            </div>
            {/* transcript */}
            <div className="h-[112px] shrink-0 flex flex-col border-t border-[#a8a8a8] mt-[3px]">
              <div className="h-[18px] shrink-0 flex items-center pl-[5px]">
                <span className="text-[#222] mr-[5px]">Transcript</span>
                <Rule className="flex-1" /><Dots /><Rule className="flex-1" />
                <div className="ml-[2px] -mr-[22px]"><Dock /></div>
              </div>
              <div className="flex-1 min-h-0 ml-[6px] flex">
                <div className="flex-1 min-w-0 bg-white border-t-2 border-l border-[#222] pt-[1px] pl-[2px]">
                  {[16, 17, 18, 19].map((n) => (
                    <div key={n} className="h-[15px] flex items-center whitespace-nowrap"><span className="text-[#00007c] w-[51px] tracking-[-0.6px]">VSIM {n}&gt;</span><span className="text-[#111]">run</span></div>
                  ))}
                  <div className="h-[12px]" />
                  <div className="h-[15px] flex items-center text-[#00007c] tracking-[-0.6px]">VSIM 20&gt;</div>
                </div>
                <div className="w-[8px] shrink-0 flex flex-col ml-[3px] overflow-hidden">
                  <div className="h-[16px] bg-[#f0f0f0] border-b-2 border-[#909090] flex items-center pl-[2px]"><S w={8} h={4}><path d="M4 0l4 4H0z" fill="#111" /></S></div>
                  <div className="flex-1 bg-[#f7f7f7]" />
                  <div className="h-[16px] bg-[#f0f0f0] border-b-2 border-[#909090] flex items-center pl-[2px]"><S w={8} h={4}><path d="M0 0h8L4 4z" fill="#111" /></S></div>
                </div>
              </div>
            </div>
            {/* transcript tab */}
            <div className="h-[33px] shrink-0 flex items-start pl-[7px] pt-[4px]">
              <div className="w-[83px] h-[23px] shrink-0 flex items-center gap-[5px] pl-[8px] border-l border-r border-b-2 border-[#222] rounded-b-[3px] text-[#222]">
                <S w={14} h={14}><path d="M1 13V4c2-5 10-5 12 0v9h-3V7H4v6z" fill="#777" /><path d="M4 8h6v4H4z" fill="#ddd" /></S>
                <span>Transcript</span>
              </div>
              <div className="flex-1 h-px bg-[#222]" />
              <div className="w-[10px] h-[14px] -mt-[1px] shrink-0 flex items-center border border-[#aaa]"><S w={8} h={8} className="ml-[1px]"><path d="M4 0L0 4l4 4M7 0L3 4l4 4" fill="none" stroke="#333" /></S></div>
            </div>
            {/* status */}
            <div className="flex-1 min-h-0 flex items-stretch border-t border-[#a8a8a8] pt-[2px] pb-[2px] pl-[2px] text-[13px] tracking-[0.05px] text-[#223]">
              <div className="w-[72px] shrink-0 border-l border-t border-[#808080] flex items-center pl-[2px] whitespace-nowrap">Project : as</div>
              <div className="ml-[5px] w-[261px] shrink-0 border-l border-t border-[#808080] flex items-center pl-[2px] whitespace-nowrap">Now: 1,700 ns<span className="ml-[12px]">Delta: 2</span></div>
              <div className="ml-[5px] w-[580px] shrink-0 border-l border-t border-[#808080] flex items-center pl-[2px]">sim:/top_receiver_tb</div>
              <div className="ml-[5px] w-[421px] shrink-0 border-l border-t border-[#808080] flex items-center pl-[2px]">750 ns to 1750 ns</div>
            </div>
          </div>
        </div>
      </div>
      {/* taskbar */}
      <div className="h-[40px] shrink-0 bg-[#120e0e] flex items-stretch">
        <div className="w-[48px] shrink-0 flex items-center justify-center">
          <S w={16} h={16}><path d="M0 2.500l6.800-1V7.600H0zM7.700 1.400L16 .2V7.600H7.700zM0 8.400h6.800v6.100l-6.800-1zM7.700 8.400H16v7.400l-8.300-1.200z" fill="#fff" /></S>
        </div>
        <div className="w-[344px] shrink-0 bg-[#f0f0f0] flex items-center pl-[9px]">
          <div className="w-[21px] h-[21px] rounded-full border-[3px] border-[#222]" />
          <span className="ml-[10px] text-[14.5px] text-[#444] tracking-[0px]">Type here to search</span>
          <S w={12} h={16} className="ml-auto mr-[15px]"><rect x="3.500" y=".5" width="5" height="10" rx="2.500" fill="none" stroke="#333" /><path d="M1 7c0 6 10 6 10 0M6 12v3M3 15.500h6" fill="none" stroke="#333" /></S>
        </div>
        <div className="w-[2px] shrink-0" />
        <TaskCell><S w={16} h={16}><path d="M1 2.500h14M1 13.500h14M2.500 5h9v6h-9z" fill="none" stroke="#fff" /><rect x="13" y="6.500" width="2.500" height="2.500" fill="#fff" /></S></TaskCell>
        <TaskCell><S w={24} h={24}><circle cx="12" cy="13" r="10.500" fill="#e8402a" /><path d="M12 2.500A10.500 10.500 0 0 1 22.500 13c0 4-3 8-7 9.500 3-3 4-7 1-10-1-3-3-3-4-6z" fill="#f9b81c" /><circle cx="11" cy="11" r="5" fill="#3a4ec0" /><path d="M5 5c2 2 4 1 6 2l-1 5c-2 1-5 0-6 2-1-3-1-6 1-9z" fill="#f56a22" /></S></TaskCell>
        <TaskCell><S w={24} h={24}><ellipse cx="10" cy="14" rx="9.500" ry="8" fill="#c8dcef" /><circle cx="6" cy="11" r="1.800" fill="#e04040" /><circle cx="11" cy="9" r="1.800" fill="#f0c020" /><circle cx="6" cy="16" r="1.800" fill="#30a0e0" /><circle cx="11" cy="18" r="1.800" fill="#40b050" /><path d="M21 1l2 1.500-8 11-3-1z" fill="#e8a040" /></S></TaskCell>
        <TaskCell on><S w={22} h={20}><path d="M0 3h8l2 2h12v14H0z" fill="#f7e29a" /><path d="M0 3h8l2 2H0z" fill="#e8c860" /><path d="M7 11h8l2 2v5h-3v-3H8v3H5v-5z" fill="#2fa6e8" /></S></TaskCell>
        <TaskCell><S w={24} h={24}><rect x="2" y="1" width="7" height="10" rx="1" fill="#f0a828" /><path d="M11 1.500h9v9" fill="none" stroke="#2a8a3a" strokeDasharray="2 2" /><path d="M1 22V12M1 22h9" fill="none" stroke="#2a8a3a" strokeDasharray="2 2" /><path d="M9 22l10-10M8 12l11 11" stroke="#bbb" strokeWidth="2.400" /><path d="M17 10l5 5" stroke="#ddd" strokeWidth="3" /></S></TaskCell>
        <TaskCell><M /></TaskCell>
        <TaskCell on><S w={22} h={22}><circle cx="11" cy="11" r="11" fill="#dd4b3e" /><path d="M11 11L1.500 5.500A11 11 0 0 0 6 20.800L15.800 13.700z" fill="#2a9a4a" /><path d="M20.500 5.500A11 11 0 0 1 11 22l4.800-8.300L11 5.500z" fill="#f7c93e" /><circle cx="11" cy="11" r="5" fill="#fff" /><circle cx="11" cy="11" r="4" fill="#4285f4" /></S></TaskCell>
        <TaskCell>
          <div className="w-[21px] h-[21px] bg-[#111] border-2 border-t-[#27c2a0] border-r-[#27c2c2] border-b-[#f2d020] border-l-[#27c280] flex flex-col items-start pl-[2px] pt-[2px] text-white font-bold text-[9px]">
            <span>PC</span>
            <div className="w-[6px] h-px mt-[2px] bg-white" />
          </div>
        </TaskCell>
        <TaskCell on><S w={24} h={22}><rect x="1" y="12" width="5" height="9" fill="#e84a3a" /><rect x="6.500" y="9" width="5" height="12" fill="#f0a030" /><rect x="12" y="5" width="5" height="16" fill="#2a9ae8" /><rect x="17.500" y="1" width="5" height="20" fill="#50c860" /></S></TaskCell>
        <TaskCell active><M sel /></TaskCell>
        <Tray />
      </div>
    </div>
  );
}
